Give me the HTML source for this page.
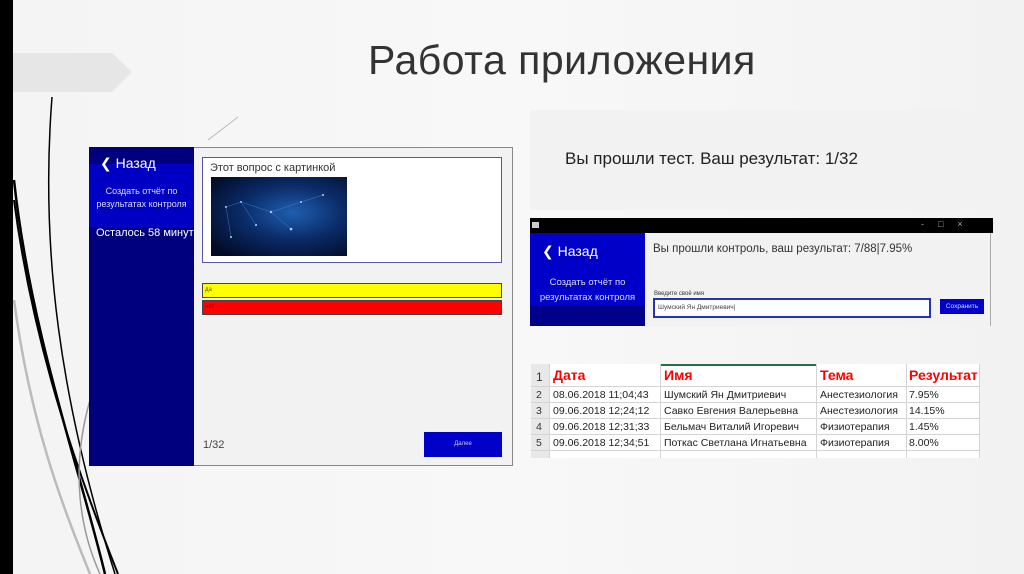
<!DOCTYPE html>
<html><head><meta charset="utf-8"><style>
*{margin:0;padding:0;box-sizing:border-box}
body{width:1024px;height:574px;overflow:hidden;position:relative;background:linear-gradient(90deg,#f4f4f4,#f8f8f8 50%,#f2f2f2);font-family:"Liberation Sans","DejaVu Sans",sans-serif}
.a{position:absolute}
.t{white-space:nowrap}
</style></head><body>
<div class="a" style="left:0;top:0;width:13px;height:574px;background:#000"></div>
<svg class="a" style="left:0;top:0" width="260" height="574">
<polygon points="13,53 112,53 132,72 112,92 13,92" fill="#e6e6e6"/>
<path d="M52,97 C40,250 60,400 115,574" stroke="#000" stroke-width="1.5" fill="none"/>
<path d="M14,180 C30,330 80,470 105,574" stroke="#000" stroke-width="2.5" fill="none"/>
<path d="M14,200 C35,360 85,490 118,574" stroke="#000" stroke-width="2" fill="none"/>
<path d="M14,300 C30,420 60,500 90,574" stroke="#bbb" stroke-width="2.5" fill="none"/>
<path d="M90,400 C70,470 80,530 100,574" stroke="#999" stroke-width="1.5" fill="none"/>
<path d="M208,140 L238,117" stroke="#bbb" stroke-width="1" fill="none"/>
</svg>
<div class="a t" style="left:368px;top:37px;font-size:41px;color:#333;letter-spacing:0.5px">Работа приложения</div>

<!-- main panel -->
<div class="a" style="left:89px;top:147px;width:424px;height:319px;background:#f2f2f2;border:1px solid #888"></div>
<div class="a" style="left:89px;top:147px;width:105px;height:319px;background:#00007f"></div>
<div class="a" style="left:89px;top:164px;width:105px;height:63px;background:#0000c4"></div>
<div class="a t" style="left:100px;top:155px;color:#fff;font-size:14px">❮ Назад</div>
<div class="a" style="left:89px;top:185px;width:105px;text-align:center;color:#dde;font-size:9px;line-height:13px">Создать отчёт по<br>результатах контроля</div>
<div class="a t" style="left:96px;top:227px;color:#fff;font-size:11px">Осталось 58 минут</div>
<div class="a" style="left:202px;top:157px;width:300px;height:106px;background:#fff;border:1px solid #5555aa"></div>
<div class="a t" style="left:210px;top:162px;font-size:11px;color:#333">Этот вопрос с картинкой</div>
<div class="a" style="left:211px;top:177px;width:136px;height:79px;background:radial-gradient(ellipse at 60% 45%,#1f5fb0,#0a2a66 45%,#020a24 90%)"></div>
<svg class="a" style="left:211px;top:177px" width="136" height="79"><g fill="#bfe0ff"><circle cx="15" cy="30" r="1"/><circle cx="30" cy="25" r="1"/><circle cx="60" cy="35" r="1.2"/><circle cx="90" cy="25" r="1"/><circle cx="80" cy="52" r="1.3"/><circle cx="112" cy="18" r="1"/><circle cx="20" cy="60" r="1"/><circle cx="45" cy="48" r="1"/></g><path d="M15,30 L30,25 L60,35 L90,25 L112,18 M60,35 L80,52 M15,30 L20,60 M30,25 L45,48" stroke="#4a8ad8" stroke-width="0.4" fill="none"/></svg>
<div class="a" style="left:202px;top:283px;width:300px;height:15px;background:#ff0;border:1px solid #444;font-size:6px;padding:3px 2px;color:#553">да</div>
<div class="a" style="left:202px;top:300px;width:300px;height:15px;background:#f00;border:1px solid #444;font-size:6px;padding:3px 2px;color:#800">нет</div>
<div class="a t" style="left:203px;top:439px;font-size:11px;color:#444">1/32</div>
<div class="a" style="left:424px;top:432px;width:78px;height:25px;background:#0000c8;color:#ccd;font-size:6px;text-align:center;line-height:25px">Далее</div>

<!-- result panel -->
<div class="a" style="left:530px;top:110px;width:475px;height:100px;background:#f2f2f2"></div>
<div class="a t" style="left:565px;top:149px;font-size:17px;color:#222">Вы прошли тест. Ваш результат: 1/32</div>

<div class="a" style="left:530px;top:218px;width:463px;height:15px;background:#000"></div>
<div class="a" style="left:532px;top:222px;width:7px;height:6px;background:#ccc"></div>
<div class="a t" style="left:921px;top:219px;font-size:9px;color:#aaa;letter-spacing:14px">-□×</div>
<div class="a" style="left:530px;top:233px;width:463px;height:93px;background:#f2f2f2"></div>
<div class="a" style="left:990px;top:233px;width:1px;height:93px;background:#aaa"></div>
<div class="a" style="left:530px;top:233px;width:115px;height:93px;background:#0000c8"></div>
<div class="a" style="left:530px;top:306px;width:115px;height:20px;background:#00008a"></div>
<div class="a t" style="left:542px;top:243px;color:#fff;font-size:14px">❮ Назад</div>
<div class="a" style="left:530px;top:275px;width:115px;text-align:center;color:#dde;font-size:9.5px;line-height:15px">Создать отчёт по<br>результатах контроля</div>
<div class="a t" style="left:653px;top:243px;font-size:11.5px;color:#333">Вы прошли контроль, ваш результат: 7/88|7.95%</div>
<div class="a t" style="left:654px;top:291px;font-size:6px;color:#333">Введите своё имя</div>
<div class="a" style="left:653px;top:298px;width:278px;height:20px;background:#fff;border:2px solid #2233bb;font-size:6.5px;color:#444;padding:4px 3px">Шумский Ян Дмитриевич|</div>
<div class="a" style="left:940px;top:299px;width:44px;height:15px;background:#0000c8;color:#dde;font-size:6.5px;text-align:center;line-height:15px">Сохранить</div>

<!-- table -->
<div class="a" style="left:531px;top:364px;width:449px;height:94px;background:#fff"></div>
<div class="a" style="left:531px;top:364px;width:18px;height:94px;background:#e8e8e8"></div>
<div class="a" style="left:660px;top:364px;width:156px;height:2px;background:#217346"></div>
<svg class="a" style="left:531px;top:364px" width="450" height="94">
<g stroke="#d4d4d4" stroke-width="1">
<line x1="0" y1="22.5" x2="449" y2="22.5"/><line x1="0" y1="38.5" x2="449" y2="38.5"/><line x1="0" y1="54.5" x2="449" y2="54.5"/><line x1="0" y1="70.5" x2="449" y2="70.5"/><line x1="0" y1="86.5" x2="449" y2="86.5"/>
<line x1="18.5" y1="0" x2="18.5" y2="94"/><line x1="129.5" y1="0" x2="129.5" y2="94"/><line x1="285.5" y1="0" x2="285.5" y2="94"/><line x1="375.5" y1="0" x2="375.5" y2="94"/><line x1="448.5" y1="0" x2="448.5" y2="94"/>
</g></svg>
<div class="a t" style="left:531px;top:364px;font-size:10.5px;line-height:16px;color:#222">
<div style="position:absolute;left:5px;top:5px;font-size:12px;color:#333">1</div>
<div style="position:absolute;left:22px;top:3px;font-size:14px;font-weight:bold;color:#f00">Дата</div>
<div style="position:absolute;left:133px;top:3px;font-size:14px;font-weight:bold;color:#f00">Имя</div>
<div style="position:absolute;left:289px;top:3px;font-size:14px;font-weight:bold;color:#f00">Тема</div>
<div style="position:absolute;left:378px;top:3px;font-size:14px;font-weight:bold;color:#f00">Результат</div>
<div style="position:absolute;left:5px;top:23px;line-height:16px;color:#333">2<br>3<br>4<br>5</div>
<div style="position:absolute;left:22px;top:23px">08.06.2018 11;04;43<br>09.06.2018 12;24;12<br>09.06.2018 12;31;33<br>09.06.2018 12;34;51</div>
<div style="position:absolute;left:133px;top:23px">Шумский Ян Дмитриевич<br>Савко Евгения Валерьевна<br>Бельмач Виталий Игоревич<br>Поткас Светлана Игнатьевна</div>
<div style="position:absolute;left:289px;top:23px">Анестезиология<br>Анестезиология<br>Физиотерапия<br>Физиотерапия</div>
<div style="position:absolute;left:378px;top:23px">7.95%<br>14.15%<br>1.45%<br>8.00%</div>
</div>
</body></html>
